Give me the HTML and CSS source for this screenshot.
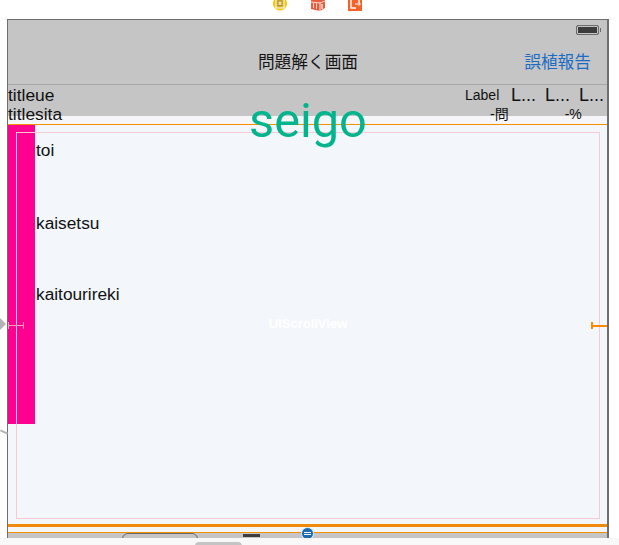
FILE: index.html
```
<!DOCTYPE html>
<html lang="ja">
<head>
<meta charset="utf-8">
<title>問題解く画面</title>
<link rel="stylesheet" href="styles.css">
</head>
<body>
<div class="page">
  <div class="toolbar">
    <svg class="tool-icon first" width="16" height="12" viewBox="0 0 16 12"><circle cx="8" cy="3.500" r="7" fill="#f5c400"/><rect x="4" y="-1" width="8" height="9" fill="#d9b23a" stroke="#fff" stroke-width="1"/><rect x="6" y="1" width="4" height="4.500" fill="#f3dc8a" stroke="#9a7d18" stroke-width=".7"/></svg>
    <svg class="tool-icon second" width="16" height="12" viewBox="0 0 16 12"><path d="M1 0h14v8l-5 3-9-2z" fill="#ec5a3c"/><path d="M10 2v9M1 2l9 1 5-2" stroke="#fff" stroke-width=".8" fill="none"/><path d="M12 4v5" stroke="#fff" stroke-width="1.200"/><path d="M3.500 3v5M6.500 3v6" stroke="#ffd5c8" stroke-width="1"/></svg>
    <svg class="tool-icon third" width="14" height="11" viewBox="0 0 14 11"><rect width="14" height="11" fill="#f4622a"/><path d="M3 0v8h5M11 0v3" stroke="#fff" stroke-width="1.400" fill="none"/><path d="M7 4h5M10.500 2.500l2 1.500-2 1.500" stroke="#fff" stroke-width="1" fill="none"/></svg>
  </div>
  <div class="device">
    <div class="navbar">
      <div class="status"><span class="battery"></span></div>
      <div class="nav-row">
        <span class="nav-title">問題解く画面</span>
        <span class="nav-action">誤植報告</span>
      </div>
    </div>
    <div class="header">
      <div class="header-row">
        <span class="title-text">titleue</span>
        <span class="label-small">Label</span>
        <span class="label-l first-l">L...</span>
        <span class="label-l">L...</span>
        <span class="label-l">L...</span>
      </div>
      <div class="header-row">
        <span class="title-text">titlesita</span>
        <span class="stat stat-count">-問</span>
        <span class="stat stat-rate">-%</span>
      </div>
    </div>
    <div class="strip"></div>
    <div class="canvas">
      <div class="side-bar"></div>
      <div class="items">
        <div class="item item-toi">toi</div>
        <div class="item item-kaisetsu">kaisetsu</div>
        <div class="item item-rireki">kaitourireki</div>
      </div>
      <div class="scroll-frame"><span class="scroll-name">UIScrollView</span></div>
      <div class="pin pin-left"></div>
      <div class="pin pin-right"></div>
    </div>
    <div class="gap-row"></div>
    <div class="tabbar">
      <span class="tab-pill"></span>
      <span class="tab-bar-mark"></span>
    </div>
    <div class="seigo">seigo</div>
  </div>
  <span class="arrow-left"></span>
  <span class="arrow-line"></span>
  <div class="resize-handle"><span></span></div>
  <div class="footer"><span class="footer-pill"></span></div>
</div>
</body>
</html>
```
FILE: styles.css
```
* {
  box-sizing: border-box;
}

html,
body {
  margin: 0;
  padding: 0;
  background: #fff;
}

.page {
  position: relative;
  width: 619px;
  height: 545px;
  overflow: hidden;
  font-family: "Liberation Sans", "Noto Sans CJK JP", sans-serif;
  color: #111;
}

.toolbar {
  display: flex;
  height: 19px;
  padding-left: 272px;
  align-items: flex-start;
}

.tool-icon.second {
  margin-left: 22px;
}

.tool-icon.third {
  margin-left: 22px;
}

.device {
  position: relative;
  width: 602px;
  height: 519px;
  margin-left: 7px;
  border-top: 1px solid #6f6f6f;
  border-left: 1px solid #6f6f6f;
  border-right: 2px solid #6f6f6f;
}

.navbar {
  height: 65px;
  background: #c5c5c5;
  border-bottom: 1px solid #a8a8a8;
}

.status {
  display: flex;
  justify-content: flex-end;
  height: 20px;
  padding: 5px 8px 0 0;
}

.battery {
  position: relative;
  width: 23px;
  height: 10px;
  background: #3c3c3c;
  border: 1px solid #6a6a6a;
  box-shadow: inset 0 0 0 1px #c5c5c5;
  border-radius: 2px;
}

.battery::after {
  content: "";
  position: absolute;
  right: -3px;
  top: 2px;
  width: 1px;
  height: 4px;
  background: #6a6a6a;
}

.nav-row {
  position: relative;
  display: flex;
  justify-content: center;
  align-items: center;
  height: 42px;
  font-size: 16.700px;
}

.nav-title {
  color: #151515;
  margin-left: 1px;
}

.nav-action {
  position: absolute;
  right: 16px;
  top: 9px;
  color: #1c6cc4;
}

.header {
  height: 31px;
  background: #c5c5c5;
}

.header-row {
  display: flex;
  align-items: center;
  height: 20px;
  line-height: 20px;
}

.header-row:first-child {
  height: 19px;
}

.title-text {
  width: 457px;
  font-size: 17.400px;
  flex: none;
}

.label-small {
  width: 35px;
  font-size: 14px;
  flex: none;
}

.label-l {
  width: 26px;
  margin-left: 8px;
  font-size: 18px;
  white-space: nowrap;
  flex: none;
}

.first-l {
  margin-left: 11px;
}

.stat {
  font-size: 14px;
  flex: none;
}

.stat-count {
  margin-left: 25px;
}

.stat-rate {
  margin-left: 56px;
}

.strip {
  height: 8px;
  background: #f6f6f8;
}

.canvas {
  position: relative;
  display: flex;
  height: 403px;
  background: #f3f7fb;
  border-top: 1px solid #f58f00;
  border-bottom: 3px solid #f08a0a;
}

.side-bar {
  width: 27px;
  height: 299px;
  flex: none;
  background: #ff0090;
}

.items {
  margin-left: 1px;
  font-size: 17.300px;
  color: #111;
}

.item {
  height: 20px;
  line-height: 20px;
}

.item-toi {
  margin-top: 15px;
}

.item-kaisetsu {
  margin-top: 53px;
}

.item-rireki {
  margin-top: 51px;
}

.scroll-frame {
  position: absolute;
  left: 8px;
  top: 7px;
  width: 584px;
  height: 387px;
  border: 1px solid #f7c9d0;
  display: flex;
  align-items: center;
  justify-content: center;
}

.scroll-name {
  margin-bottom: 4px;
  color: #fff;
  font-size: 13px;
  font-weight: 700;
}

.pin {
  position: absolute;
  top: 200px;
  height: 1px;
}

.pin::before,
.pin-left::after {
  content: "";
  position: absolute;
  top: -3px;
  width: 1px;
  height: 7px;
}

.pin::before {
  left: 0;
}

.pin-left::after {
  right: 0;
}

.pin-left {
  left: 0;
  width: 16px;
  background: #ff9fc0;
}

.pin-left::before,
.pin-left::after {
  background: #ff9fc0;
}

.pin-right {
  right: 0;
  width: 16px;
  height: 2px;
  background: #ff8a00;
}

.pin-right::before {
  width: 2px;
  background: #ff8a00;
}

.gap-row {
  height: 6px;
  background: #f4f6fa;
  border-bottom: 1px solid #f58f00;
}

.tabbar {
  position: relative;
  height: 5px;
  background: #c5c5c5;
  overflow: hidden;
}

.tab-pill {
  position: absolute;
  left: 114px;
  top: 0;
  width: 76px;
  height: 12px;
  border: 1px solid #666;
  border-radius: 10px;
}

.tab-bar-mark {
  position: absolute;
  left: 235px;
  top: 1px;
  width: 17px;
  height: 3px;
  background: #3d3d3d;
}

.seigo {
  position: absolute;
  left: 241px;
  top: 73px;
  font-family: Roboto, "Liberation Sans", sans-serif;
  font-size: 48.700px;
  line-height: 56px;
  color: #00b58d;
}

.arrow-left {
  position: absolute;
  left: 0;
  top: 318px;
  border-top: 6px solid transparent;
  border-bottom: 6px solid transparent;
  border-left: 6px solid #b3b3b3;
}

.arrow-line {
  position: absolute;
  left: 0;
  top: 431px;
  width: 8px;
  height: 2px;
  background: #b3b3b3;
  transform: rotate(25deg);
}

.resize-handle {
  position: absolute;
  left: 301px;
  top: 527px;
  width: 13px;
  height: 13px;
  border-radius: 50%;
  background: #1c6cb4;
  border: 1px solid #e8eef5;
  display: flex;
  align-items: center;
  justify-content: center;
}

.resize-handle span {
  width: 7px;
  height: 3px;
  border-top: 1px solid #fff;
  border-bottom: 1px solid #fff;
}

.footer {
  position: absolute;
  left: 0;
  right: 0;
  top: 538px;
  height: 7px;
  background: #f8f8f8;
}

.footer-pill {
  position: absolute;
  left: 195px;
  top: 4px;
  width: 47px;
  height: 6px;
  border-radius: 4px 4px 0 0;
  background: #c4c4c4;
}
```
